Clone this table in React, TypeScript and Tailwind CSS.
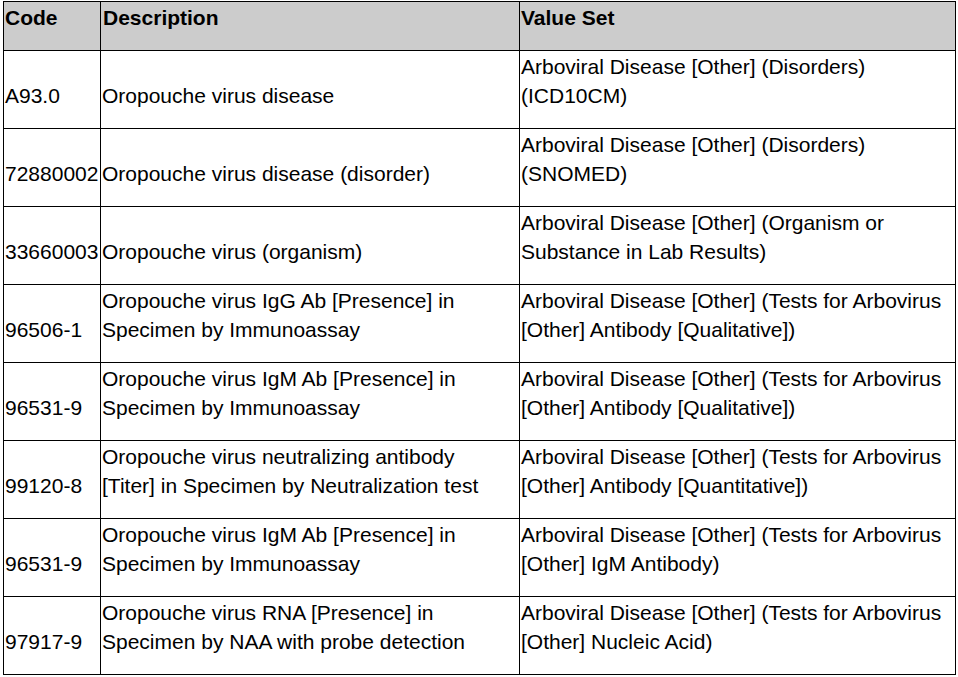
const rows: { code: string; desc: string[]; set: string[] }[] = [
  { code: "A93.0", desc: ["Oropouche virus disease"], set: ["Arboviral Disease [Other] (Disorders)", "(ICD10CM)"] },
  { code: "72880002", desc: ["Oropouche virus disease (disorder)"], set: ["Arboviral Disease [Other] (Disorders)", "(SNOMED)"] },
  { code: "33660003", desc: ["Oropouche virus (organism)"], set: ["Arboviral Disease [Other] (Organism or", "Substance in Lab Results)"] },
  {
    code: "96506-1",
    desc: ["Oropouche virus IgG Ab [Presence] in", "Specimen by Immunoassay"],
    set: ["Arboviral Disease [Other] (Tests for Arbovirus", "[Other] Antibody [Qualitative])"],
  },
  {
    code: "96531-9",
    desc: ["Oropouche virus IgM Ab [Presence] in", "Specimen by Immunoassay"],
    set: ["Arboviral Disease [Other] (Tests for Arbovirus", "[Other] Antibody [Qualitative])"],
  },
  {
    code: "99120-8",
    desc: ["Oropouche virus neutralizing antibody", "[Titer] in Specimen by Neutralization test"],
    set: ["Arboviral Disease [Other] (Tests for Arbovirus", "[Other] Antibody [Quantitative])"],
  },
  {
    code: "96531-9",
    desc: ["Oropouche virus IgM Ab [Presence] in", "Specimen by Immunoassay"],
    set: ["Arboviral Disease [Other] (Tests for Arbovirus", "[Other] IgM Antibody)"],
  },
  {
    code: "97917-9",
    desc: ["Oropouche virus RNA [Presence] in", "Specimen by NAA with probe detection"],
    set: ["Arboviral Disease [Other] (Tests for Arbovirus", "[Other] Nucleic Acid)"],
  },
];

function Lines({ lines }: { lines: string[] }) {
  return (
    <>
      {lines.map((l, i) => (
        <span key={i} className="block whitespace-nowrap">
          {l}
        </span>
      ))}
    </>
  );
}

export default function App() {
  return (
    <div className="w-[958px] h-[677px] bg-white pt-[1px] pl-[3px] font-['Liberation_Sans',Arial,sans-serif] text-[21px] leading-[29px] text-black">
      <table className="table-fixed border-collapse w-[952px]">
        <colgroup>
          <col className="w-[97px]" />
          <col className="w-[419px]" />
          <col className="w-[436px]" />
        </colgroup>
        <thead>
          <tr className="h-[49px] bg-[#cccccc]">
            <th className="border border-black align-top text-left font-bold pl-[1px] pt-[1px]">Code</th>
            <th className="border border-black align-top text-left font-bold pl-[2px] pt-[1px]">Description</th>
            <th className="border border-black align-top text-left font-bold pl-[1px] pt-[1px]">Value Set</th>
          </tr>
        </thead>
        <tbody>
          {rows.map((r, i) => (
            <tr key={i} className="h-[78px]">
              <td className="border border-black align-bottom pb-[18px] pl-[1px] whitespace-nowrap">{r.code}</td>
              <td className="border border-black align-bottom pb-[18px] pl-[1px]">
                <Lines lines={r.desc} />
              </td>
              <td className="border border-black align-bottom pb-[18px] pl-[1px]">
                <Lines lines={r.set} />
              </td>
            </tr>
          ))}
        </tbody>
      </table>
    </div>
  );
}
